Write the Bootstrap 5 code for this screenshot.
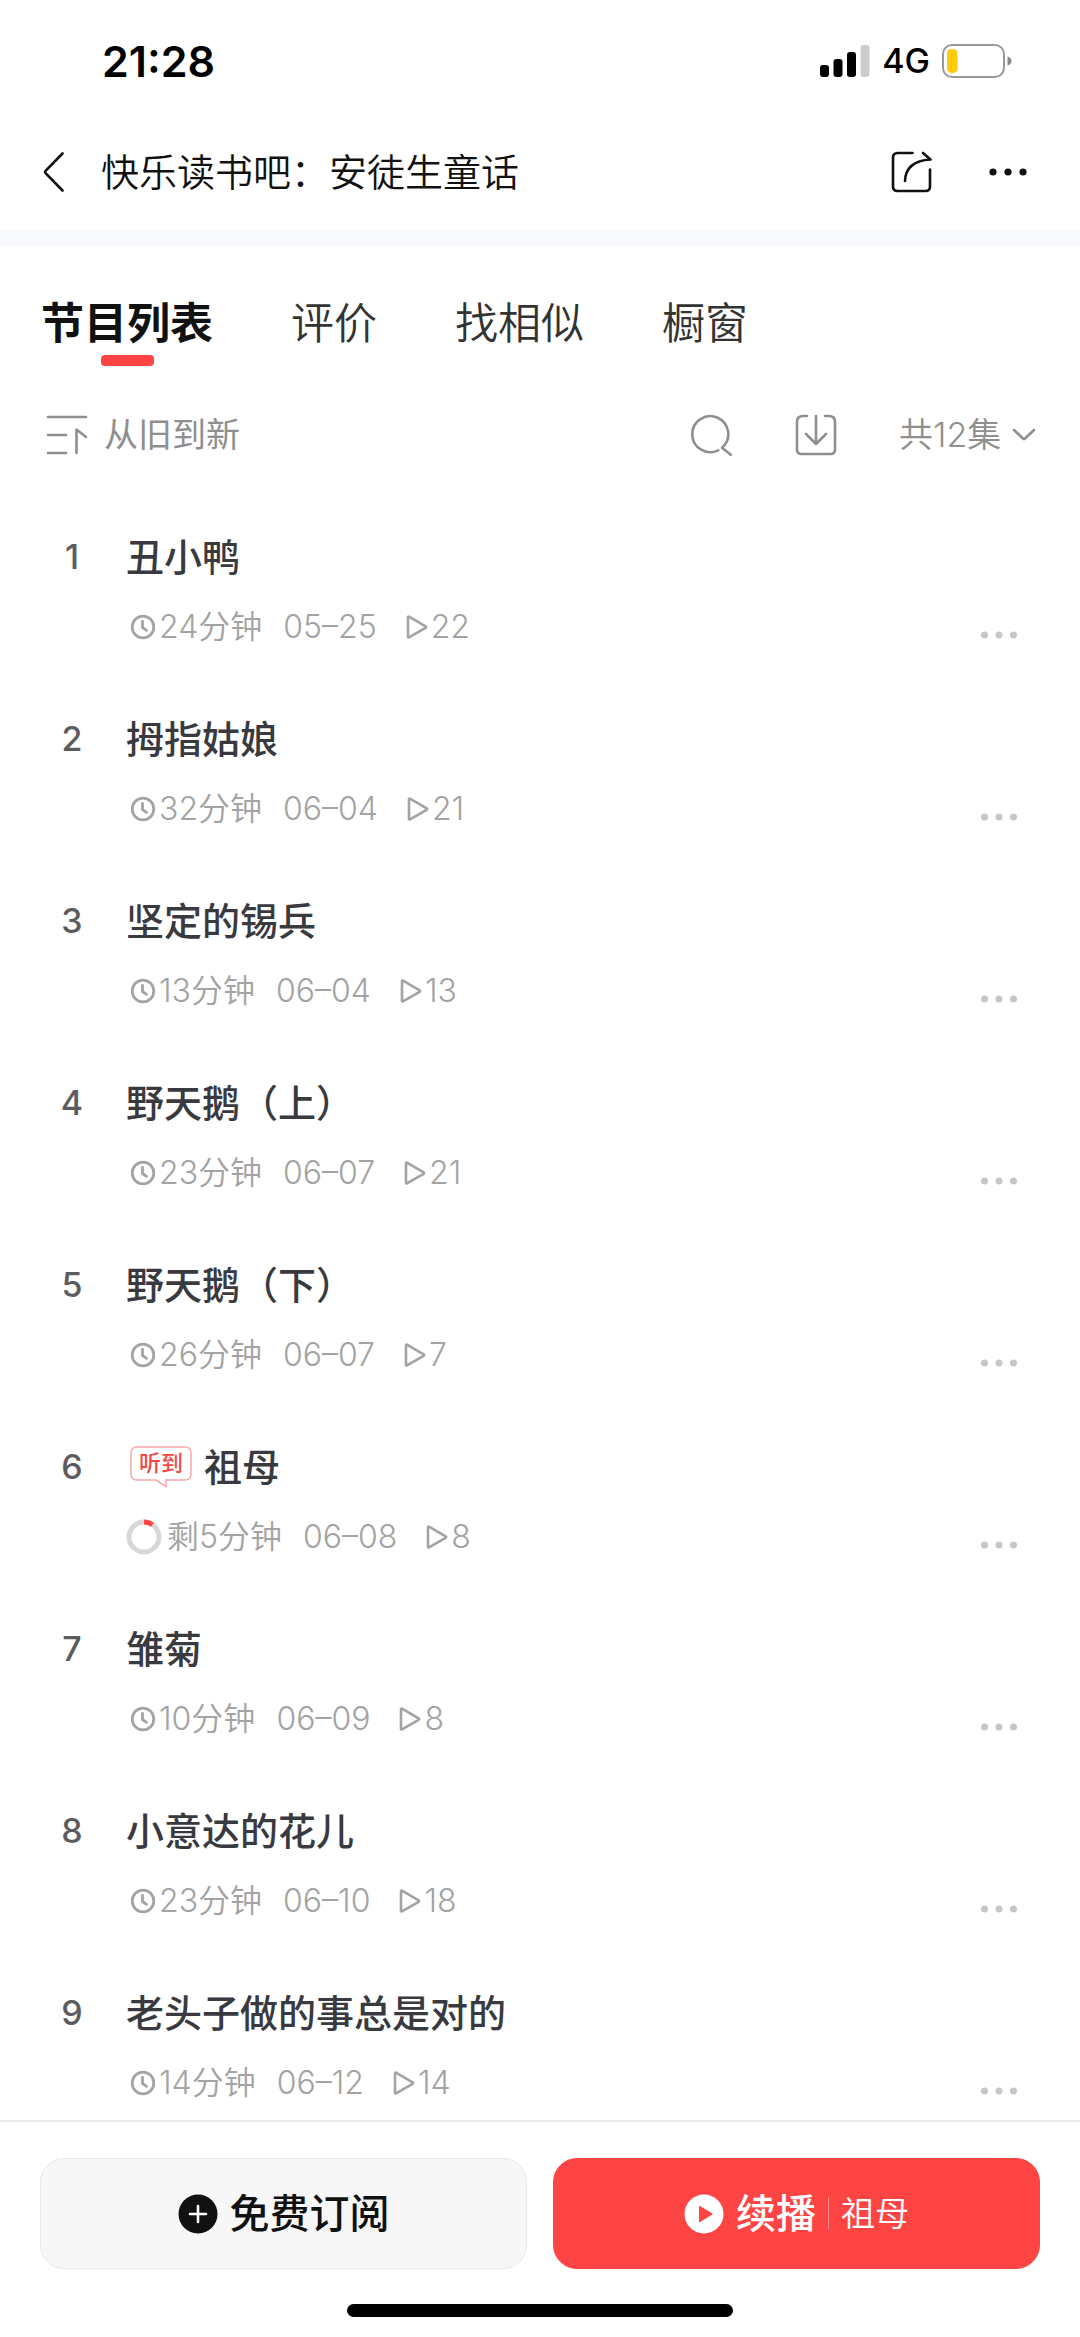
<!DOCTYPE html>
<html lang="zh-CN">
<head>
<meta charset="utf-8">
<meta name="viewport" content="width=device-width, initial-scale=1">
<title>快乐读书吧：安徒生童话</title>
<link href="https://cdn.jsdelivr.net/npm/bootstrap@5.3.0/dist/css/bootstrap.min.css" rel="stylesheet">
<style>
  :root { --brand: #ff4444; --cjk: Inter, "Noto Sans CJK SC", sans-serif; }
  body { font-family: var(--cjk); color: #111; background: #fff; }
  svg { display: block; flex: none; }
  button svg, a svg { pointer-events: none; }
  .plain { border: 0; padding: 0; background: none; color: inherit; }

  .status-bar { height: 122px; padding: 0 68px 0 102px; }
  .clock-time { font-size: 43px; font-weight: 600; line-height: 48px; color: #000; }
  .net-type { font-size: 34px; font-weight: 500; line-height: 40px; color: #000; margin: 0 12px; }

  .title-bar { height: 108px; padding: 0 53px 8px 43px; }
  .page-title { font-size: 38px; font-weight: 350; line-height: 52px; margin: 0 0 0 36px; }
  .bar-tools { gap: 56px; }
  .band { height: 16px; background: #f7f9fd; }

  .tabs { padding: 47px 41px 0; gap: 78px; }
  .tabs .nav-link { padding: 0; font-size: 43px; line-height: 60px; font-weight: 350; color: #333; }
  .tabs .nav-link.active { font-weight: 600; color: #111; }
  .tabs .active::after { content: ""; display: block; width: 53px; height: 11px; margin: 2px auto 0; border-radius: 4px; background: var(--brand); }

  .toolbar { height: 93px; margin-top: 22px; padding: 0 44px 0 46px; color: #8f8f8f; }
  .toolbar, .toolbar select { font-size: 34px; line-height: 48px; font-weight: 350; }
  .toolbar-tools { gap: 62px; }
  .toolbar select { appearance: none; margin: 0; cursor: pointer; }
  .toolbar label { gap: 10px; }

  .episode { padding: 48px 62px 16px 0; height: 182px; border: 0; background: none; }
  .ep-no { width: 126px; padding-left: 18px; text-align: center; font-size: 34px; line-height: 56px; font-weight: 500; color: #5c5c60; }
  .ep-title { font-size: 38px; line-height: 56px; font-weight: 500; color: #393940; margin: 0 0 22px; gap: 12px; }
  .ep-title a { color: inherit; text-decoration: none; }
  .ep-meta { font-size: 32px; line-height: 40px; font-weight: 350; color: #a3a3a3; gap: 21px; }
  .meta-pair { gap: 3px; padding-left: 4px; }
  .meta-pair.ring { gap: 5px; padding-left: 0; }
  .meta-pair.plays { padding-left: 8px; }
  .more { align-self: end; padding: 8px 0; color: #c6c6c6; }
  .heard { width: 62px; height: 42px; margin-left: 4px; position: relative; }
  .heard svg { position: absolute; inset: 0; }
  .heard span { position: relative; display: block; text-align: center; font-size: 22px; line-height: 34px; color: #f24848; }

  .action-bar { border-top: 2px solid #ebebeb; padding: 36px 40px 20px; background: #fff; }
  .action-row { gap: 26px; }
  .action-row .btn { height: 111px; border-radius: 24px; font-size: 40px; line-height: 56px; font-weight: 500; gap: 12px; }
  .btn-follow { --bs-btn-bg: #f7f7f7; --bs-btn-border-color: #e9e9e9; --bs-btn-color: #111; --bs-btn-hover-bg: #f0f0f0; --bs-btn-hover-border-color: #e0e0e0; }
  .btn-resume { --bs-btn-bg: var(--brand); --bs-btn-border-color: var(--brand); --bs-btn-color: #fff; --bs-btn-hover-bg: #f03838; --bs-btn-hover-color: #fff; }
  .btn-resume .rule { width: 1px; height: 33px; background: #ff8c8c; }
  .btn-resume small { font-size: 34px; font-weight: 350; }
  .home-bar { width: 386px; max-width: 60%; height: 13px; border-radius: 7px; background: #000; margin: 35px auto 0; }
</style>
<script src="https://cdn.jsdelivr.net/npm/bootstrap@5.3.0/dist/js/bootstrap.bundle.min.js"></script>
</head>
<body>
<svg width="0" height="0" class="position-absolute" aria-hidden="true">
  <symbol id="i-clock" viewBox="0 0 26 26"><g fill="none" stroke="currentColor" stroke-width="2.8" stroke-linecap="round" stroke-linejoin="round"><circle cx="13" cy="13" r="10.800"/><path d="M12.500 7.500v6l4 2.800"/></g></symbol>
  <symbol id="i-play" viewBox="0 0 22 26"><path d="M2 3.200v19.600q0 1 1 .5L19.600 13.800q1-.8 0-1.500L3 2.700q-1-.5-1 .5z" fill="none" stroke="currentColor" stroke-width="2.600" stroke-linejoin="round"/></symbol>
  <symbol id="i-dots" viewBox="0 0 38 8"><g fill="currentColor"><circle cx="4.500" cy="4" r="3.500"/><circle cx="19" cy="4" r="3.500"/><circle cx="33.500" cy="4" r="3.500"/></g></symbol>
</svg>

<div class="d-flex flex-column min-vh-100">
  <div class="status-bar d-flex align-items-center justify-content-between">
    <span class="clock-time">21:28</span>
    <div class="d-flex align-items-center">
      <svg width="50" height="32" viewBox="0 0 50 32" aria-hidden="true"><rect x="0" y="20" width="9" height="12" rx="3"/><rect x="13.500" y="14" width="9" height="18" rx="3"/><rect x="27" y="7" width="9" height="25" rx="3"/><rect x="40.500" y="0" width="9" height="32" rx="3" fill="#ccc"/></svg>
      <span class="net-type">4G</span>
      <svg width="70" height="34" viewBox="0 0 70 34" aria-hidden="true"><rect x="1" y="1" width="61" height="32" rx="9" fill="none" stroke="#999" stroke-width="2"/><rect x="5" y="5" width="10.500" height="24" rx="4.500" fill="#ffcc0a"/><path d="M65.500 12.500q4 1 4 4.500t-4 4.500z" fill="#888"/></svg>
    </div>
  </div>

  <header class="title-bar d-flex align-items-center">
    <button class="plain" type="button" aria-label="返回"><svg width="22" height="42" viewBox="0 0 22 42"><path d="M19.500 2.500L2.800 19.600q-1.300 1.400 0 2.800L19.500 39.500" fill="none" stroke="#111" stroke-width="2.600" stroke-linecap="round"/></svg></button>
    <h1 class="page-title text-truncate">快乐读书吧：安徒生童话</h1>
    <div class="bar-tools d-flex align-items-center ms-auto">
      <button class="plain" type="button" aria-label="分享"><svg width="42" height="42" viewBox="0 0 42 42"><g fill="none" stroke="#111" stroke-width="2.600" stroke-linecap="round" stroke-linejoin="round"><path d="M21.500 2H6.500Q2 2 2 6.500v29Q2 40 6.500 40h28q4.500 0 4.500-4.500V18.500"/><path d="M14 30C14.500 17 22 9.500 39.500 8.500L32 2"/></g></svg></button>
      <button class="plain" type="button" aria-label="更多"><svg width="38" height="8" viewBox="0 0 38 8"><g fill="#111"><circle cx="4" cy="4" r="3.600"/><circle cx="19" cy="4" r="3.600"/><circle cx="34" cy="4" r="3.600"/></g></svg></button>
    </div>
  </header>
  <div class="band"></div>

  <nav class="tabs nav flex-nowrap">
    <a class="nav-link active" aria-current="page" href="#list">节目列表</a>
    <a class="nav-link" href="#reviews">评价</a>
    <a class="nav-link" href="#similar">找相似</a>
    <a class="nav-link" href="#shop">橱窗</a>
  </nav>

  <div class="toolbar d-flex align-items-center justify-content-between">
    <button class="plain d-flex align-items-center gap-3" type="button">
      <svg width="42" height="40" viewBox="0 0 42 40"><path d="M2 2h38M2 20h18M2 38h18M30.500 38V14.500L40 22" fill="none" stroke="currentColor" stroke-width="2.600" stroke-linecap="round" stroke-linejoin="round"/></svg>
      <span>从旧到新</span>
    </button>
    <div class="toolbar-tools d-flex align-items-center">
      <button class="plain" type="button" aria-label="搜索"><svg width="42" height="42" viewBox="0 0 42 42"><path d="M27.200 36.300A18 18 0 1 1 31 33.800L39.800 40.700" fill="none" stroke="currentColor" stroke-width="2.600" stroke-linecap="round" stroke-linejoin="round"/></svg></button>
      <button class="plain" type="button" aria-label="下载"><svg width="42" height="42" viewBox="0 0 42 42"><path d="M12 2H8Q2 2 2 8v27.500Q2 40 6.500 40h29q4.500 0 4.500-4.500V8q0-6-6-6h-4M21 2v28M11 20l10 10 10-10" fill="none" stroke="currentColor" stroke-width="2.600" stroke-linecap="round" stroke-linejoin="round"/></svg></button>
      <label class="d-flex align-items-center">
        <select class="plain" aria-label="选集"><option>共12集</option></select>
        <svg width="24" height="14" viewBox="0 0 24 14"><path d="M2 2l9 8.500q1 .9 2 0L22 2" fill="none" stroke="currentColor" stroke-width="2.600" stroke-linecap="round"/></svg>
      </label>
    </div>
  </div>

  <main id="list" class="flex-grow-1"></main>

  <footer class="action-bar">
    <div class="action-row d-flex">
      <button class="btn btn-follow flex-fill w-50 d-flex align-items-center justify-content-center" type="button">
        <svg width="40" height="40" viewBox="0 0 40 40"><circle cx="20" cy="20" r="19.500" fill="#111"/><path d="M20 12v16M12 20h16" stroke="#fff" stroke-width="2.600" stroke-linecap="round"/></svg>
        <span>免费订阅</span>
      </button>
      <button class="btn btn-resume flex-fill w-50 d-flex align-items-center justify-content-center" type="button">
        <svg width="40" height="40" viewBox="0 0 40 40"><circle cx="20" cy="20" r="19.500" fill="#fff"/><path d="M15 12.500v15q0 1 1 .5l12-7.200q1-.8 0-1.600L16 12q-1-.5-1 .5z" fill="#ff4444"/></svg>
        <span>续播</span><span class="rule"></span><small>祖母</small>
      </button>
    </div>
    <div class="home-bar"></div>
  </footer>
</div>

<script>
  const episodes = [
    ['丑小鸭', '24', '05–25', '22'],
    ['拇指姑娘', '32', '06–04', '21'],
    ['坚定的锡兵', '13', '06–04', '13'],
    ['野天鹅（上）', '23', '06–07', '21'],
    ['野天鹅（下）', '26', '06–07', '7'],
    ['祖母', '剩5', '06–08', '8', true],
    ['雏菊', '10', '06–09', '8'],
    ['小意达的花儿', '23', '06–10', '18'],
    ['老头子做的事总是对的', '14', '06–12', '14']
  ];
  const heard = '<span class="heard"><svg width="62" height="42" viewBox="0 0 62 42"><path d="M7 1h48q6 0 6 6v21q0 6-6 6H36v6.500L26 34H7q-6 0-6-6V7q0-6 6-6z" fill="#fff" stroke="#f9a9ad" stroke-width="1.500"/></svg><span>听到</span></span>';
  const clock = '<svg width="26" height="26"><use href="#i-clock"/></svg>';
  const ring = '<svg width="36" height="36" viewBox="0 0 36 36"><g fill="none" stroke-width="5"><circle cx="18" cy="18" r="15" stroke="#d8d8d8"/><path d="M18 3a15 15 0 0 1 8.500 2.700" stroke="#ff4444"/></g></svg>';
  document.getElementById('list').innerHTML = '<div class="list-group list-group-flush">' + episodes.map(([name, mins, date, plays, current], i) => `
    <article class="episode list-group-item d-flex">
      <div class="ep-no">${i + 1}</div>
      <div class="flex-grow-1">
        <h2 class="ep-title d-flex align-items-center">${current ? heard : ''}<a href="#ep${i + 1}">${name}</a></h2>
        <div class="ep-meta d-flex">
          <span class="meta-pair d-flex align-items-center ${current ? 'ring' : ''}">${current ? ring : clock}<span>${mins}分钟</span></span>
          <span>${date}</span>
          <span class="meta-pair plays d-flex align-items-center"><svg width="22" height="26"><use href="#i-play"/></svg><span>${plays}</span></span>
        </div>
      </div>
      <button class="plain more" type="button" aria-label="更多"><svg width="38" height="8"><use href="#i-dots"/></svg></button>
    </article>`).join('') + '</div>';
</script>
</body>
</html>
